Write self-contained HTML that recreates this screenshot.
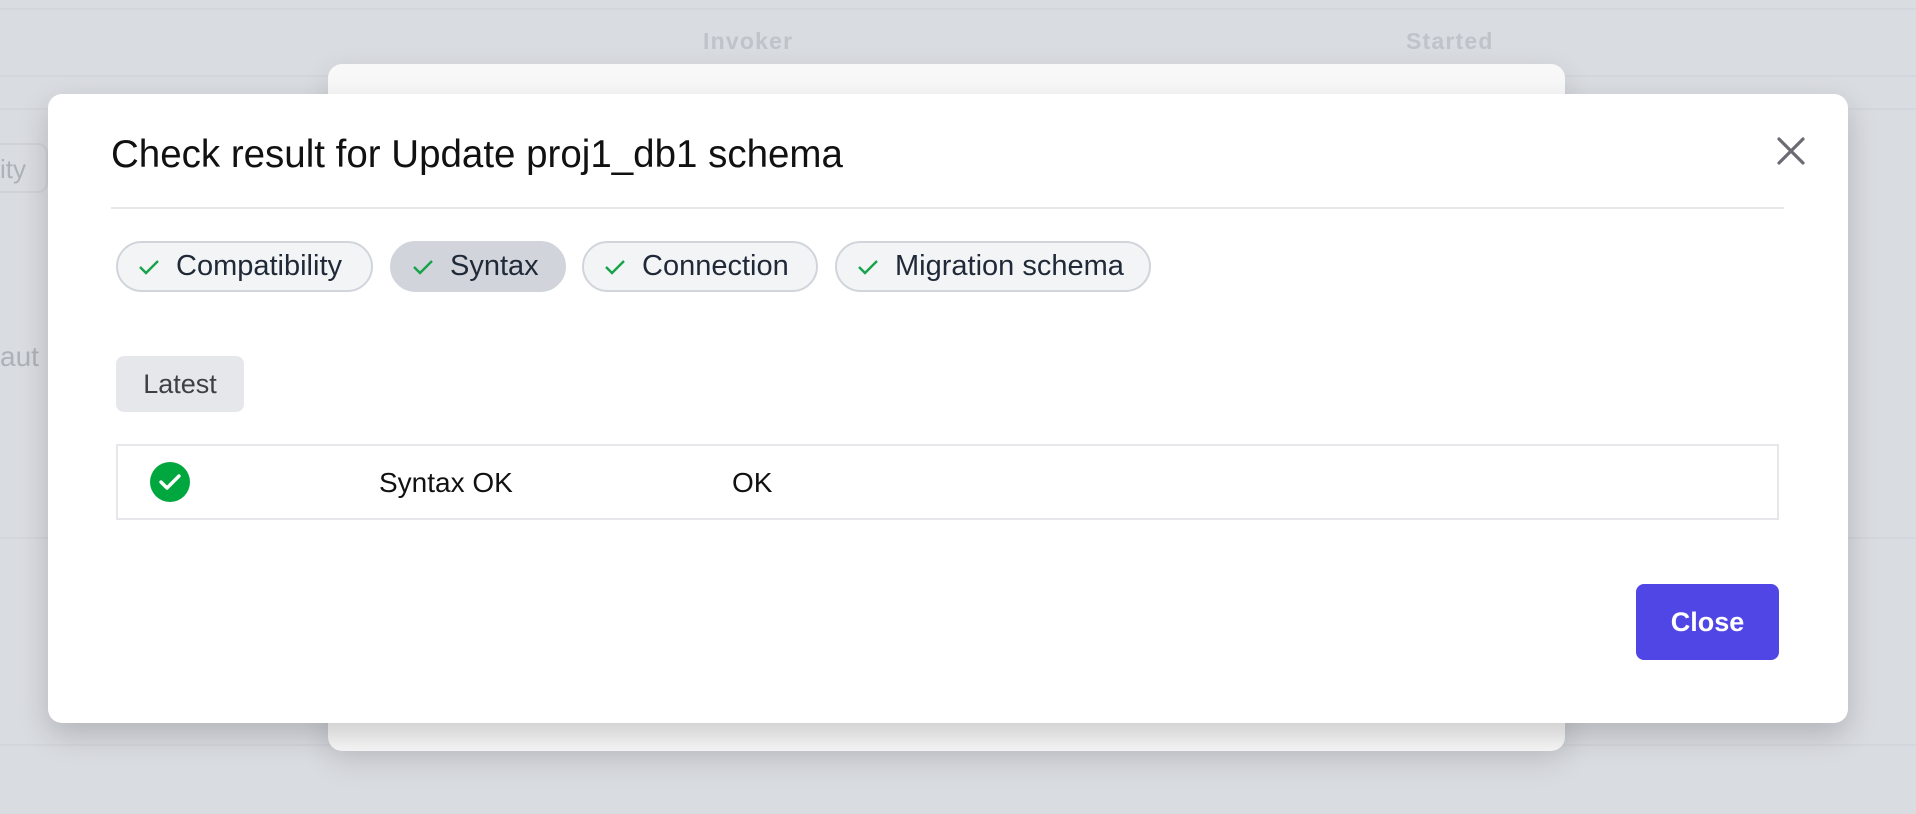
<!DOCTYPE html>
<html><head><meta charset="utf-8"><style>
*{box-sizing:border-box;margin:0;padding:0}
body{width:1916px;height:814px;background:#d9dce1;position:relative;overflow:hidden;font-family:"Liberation Sans",Arial,sans-serif}
.hline{position:absolute;left:0;width:1916px;height:2px;background:#d3d6dc}
.htxt{position:absolute;top:28px;font-size:23px;font-weight:bold;color:#bfc3ca;letter-spacing:1.2px}
.back{position:absolute;left:328px;top:64px;width:1237px;height:687px;background:#f8f8f8;border-radius:14px;box-shadow:0 10px 30px rgba(0,0,0,.12)}
.front{position:absolute;left:48px;top:94px;width:1800px;height:629px;background:#fff;border-radius:14px;box-shadow:0 12px 30px rgba(0,0,0,.18)}
.title{position:absolute;left:63px;top:39px;font-size:38.5px;color:#111;white-space:nowrap}
.x{position:absolute;left:1728px;top:42px}
.div{position:absolute;left:63px;top:113px;width:1673px;height:2px;background:#e5e7eb}
.chip{position:absolute;top:147px;height:51px;border:2px solid #d1d5db;background:#f3f4f6;border-radius:26px;font-size:29px;color:#1f2937;display:flex;align-items:center;padding-left:20px;white-space:nowrap}
.chip svg{margin-right:16px}
.chip.sel{background:#d1d5db}
.latest{position:absolute;left:68px;top:262px;width:128px;height:56px;background:#e5e7eb;border-radius:8px;font-size:27px;color:#3f3f46;display:flex;align-items:center;justify-content:center}
.tbl{position:absolute;left:68px;top:350px;width:1663px;height:76px;border:2px solid #e5e7eb}
.t{position:absolute;font-size:28px;color:#111;top:21px}
.btn{position:absolute;left:1588px;top:490px;width:143px;height:76px;background:#5046e5;border-radius:8px;color:#fff;font-weight:bold;font-size:27px;display:flex;align-items:center;justify-content:center}
</style></head><body>
<div class="hline" style="top:8px"></div>
<div class="hline" style="top:75px"></div>
<div class="hline" style="top:108px"></div>
<div class="hline" style="top:537px"></div>
<div class="hline" style="top:744px"></div>
<div class="htxt" style="left:703px">Invoker</div>
<div class="htxt" style="left:1406px">Started</div>
<div style="position:absolute;left:-20px;top:143px;width:68px;height:50px;border:2px solid #cfd2d8;border-radius:10px;font-size:26px;color:#adb1b8;padding:9px 0 0 18px">ity</div>
<div style="position:absolute;left:0;top:341px;font-size:28px;color:#adb1b8">aut</div>
<div class="back"></div>
<div class="front">
<div class="title">Check result for Update proj1_db1 schema</div>
<svg class="x" width="30" height="30" viewBox="0 0 30 30"><path d="M3 3L27 27M27 3L3 27" stroke="#6b6b74" stroke-width="3.2" stroke-linecap="round"/></svg>
<div class="div"></div>
<div class="chip" style="left:68px;width:257px"><svg width="22" height="16" viewBox="0 0 22 16"><path d="M2 8l6 6L20 2" fill="none" stroke="#16a34a" stroke-width="2.4"/></svg>Compatibility</div>
<div class="chip sel" style="left:342px;width:176px;border-color:#d1d5db"><svg width="22" height="16" viewBox="0 0 22 16"><path d="M2 8l6 6L20 2" fill="none" stroke="#16a34a" stroke-width="2.4"/></svg>Syntax</div>
<div class="chip" style="left:534px;width:236px"><svg width="22" height="16" viewBox="0 0 22 16"><path d="M2 8l6 6L20 2" fill="none" stroke="#16a34a" stroke-width="2.4"/></svg>Connection</div>
<div class="chip" style="left:787px;width:316px"><svg width="22" height="16" viewBox="0 0 22 16"><path d="M2 8l6 6L20 2" fill="none" stroke="#16a34a" stroke-width="2.4"/></svg>Migration schema</div>
<div class="latest">Latest</div>
<div class="tbl">
<svg style="position:absolute;left:32px;top:16px" width="40" height="40" viewBox="0 0 40 40"><circle cx="20" cy="20" r="20" fill="#00a63e"/><path d="M11 20l6 6L29 14" fill="none" stroke="#fff" stroke-width="3.4" stroke-linecap="round" stroke-linejoin="round"/></svg>
<div class="t" style="left:261px">Syntax OK</div>
<div class="t" style="left:614px">OK</div>
</div>
<div class="btn">Close</div>
</div>
</body></html>
